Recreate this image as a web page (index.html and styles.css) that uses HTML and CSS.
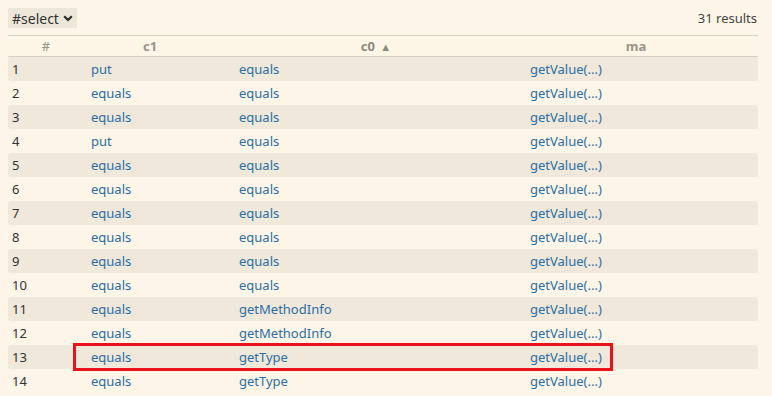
FILE: index.html
```html
<!DOCTYPE html>
<html lang="en">
<head>
    <meta charset="UTF-8">
    <title>Results</title>
    <link rel="stylesheet" href="styles.css">
</head>
<body>
    <div class="toolbar">
        <div class="select">
            #select
            <svg class="caret" width="10" height="7" viewBox="0 0 10 7">
                <path d="M1.2 1.2 L5 5 L8.8 1.2" fill="none" stroke="#2a2a2a" stroke-width="2.2"/>
            </svg>
        </div>
        <div class="count">31 results</div>
    </div>

    <div class="results">
        <table>
            <colgroup>
                <col class="w-num">
                <col class="w-c1">
                <col class="w-c0">
                <col class="w-ma">
            </colgroup>
            <thead>
                <tr>
                    <th class="h-num">#</th>
                    <th class="h-c1">c1</th>
                    <th class="h-c0">c0 <span class="arrow">&#9650;</span></th>
                    <th class="h-ma">ma</th>
                </tr>
            </thead>
            <tbody>
                <tr><td>1</td><td><a>put</a></td><td><a>equals</a></td><td><a>getValue(...)</a></td></tr>
                <tr><td>2</td><td><a>equals</a></td><td><a>equals</a></td><td><a>getValue(...)</a></td></tr>
                <tr><td>3</td><td><a>equals</a></td><td><a>equals</a></td><td><a>getValue(...)</a></td></tr>
                <tr><td>4</td><td><a>put</a></td><td><a>equals</a></td><td><a>getValue(...)</a></td></tr>
                <tr><td>5</td><td><a>equals</a></td><td><a>equals</a></td><td><a>getValue(...)</a></td></tr>
                <tr><td>6</td><td><a>equals</a></td><td><a>equals</a></td><td><a>getValue(...)</a></td></tr>
                <tr><td>7</td><td><a>equals</a></td><td><a>equals</a></td><td><a>getValue(...)</a></td></tr>
                <tr><td>8</td><td><a>equals</a></td><td><a>equals</a></td><td><a>getValue(...)</a></td></tr>
                <tr><td>9</td><td><a>equals</a></td><td><a>equals</a></td><td><a>getValue(...)</a></td></tr>
                <tr><td>10</td><td><a>equals</a></td><td><a>equals</a></td><td><a>getValue(...)</a></td></tr>
                <tr><td>11</td><td><a>equals</a></td><td><a>getMethodInfo</a></td><td><a>getValue(...)</a></td></tr>
                <tr><td>12</td><td><a>equals</a></td><td><a>getMethodInfo</a></td><td><a>getValue(...)</a></td></tr>
                <tr><td>13</td><td><a>equals</a></td><td><a>getType</a></td><td><a>getValue(...)</a></td></tr>
                <tr><td>14</td><td><a>equals</a></td><td><a>getType</a></td><td><a>getValue(...)</a></td></tr>
            </tbody>
        </table>
        <!-- highlight around row 13 -->
        <div class="mark"></div>
    </div>
</body>
</html>
```

FILE: styles.css
```css
body {
    margin: 0;
    padding: 8px;
    background: #fdf6e8;
    font-family: "Noto Sans", "Open Sans", sans-serif;
    font-size: 13px;
    color: #333;
    overflow: hidden;
}

.toolbar {
    display: flex;
    justify-content: space-between;
    align-items: center;
    height: 20px;
    width: 750px;
}

.select {
    display: flex;
    align-items: center;
    gap: 4px;
    background: #ede7d9;
    color: #333;
    font-size: 14px;
    height: 20px;
    padding: 0 4px 0 4px;
    border-radius: 1px;
}

.caret {
    margin-top: 1px;
}

.count {
    font-size: 13px;
    color: #444;
    padding-right: 1px;
}

.results {
    position: relative;
    margin-top: 7px;
    width: 750px;
}

table {
    width: 750px;
    border-collapse: separate;
    border-spacing: 0;
    table-layout: fixed;
}

.w-num { width: 79px; }
.w-c1 { width: 148px; }
.w-c0 { width: 291px; }
.w-ma { width: 232px; }

th {
    height: 20px;
    padding: 0;
    border-top: 1px solid #d8d0c0;
    border-bottom: 1px solid #d8d0c0;
    color: #9a9488;
    font-weight: bold;
    font-size: 13px;
    text-align: center;
    background: #fdf5e6;
}

.h-num { font-weight: normal; padding-right: 3px; }
.h-c1 { padding-right: 22px; }
.h-c0 { padding-right: 9px; color: #8e887c; }
.h-ma { padding-right: 12px; }

.arrow {
    font-size: 11px;
    margin-left: 2px;
}

td {
    height: 24px;
    padding: 0 0 0 4px;
    white-space: nowrap;
    overflow: hidden;
}

tbody tr:nth-child(odd) td {
    background: #efe8db;
}

tbody tr:nth-child(odd) td:first-child {
    border-radius: 3px 0 0 3px;
}

tbody tr:nth-child(odd) td:last-child {
    border-radius: 0 3px 3px 0;
}

td a {
    color: #2b6ea5;
    text-decoration: none;
}

.mark {
    position: absolute;
    left: 65px;
    top: 308px;
    width: 534px;
    height: 22px;
    border: 3px solid #e8141a;
    pointer-events: none;
}
```
